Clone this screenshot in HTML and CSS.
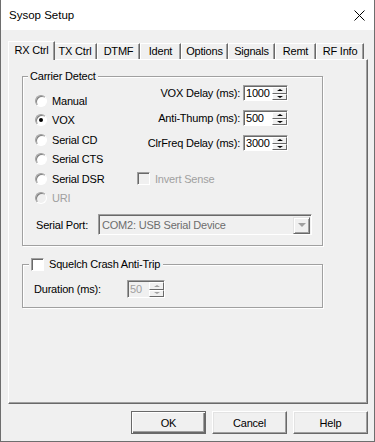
FILE: index.html
```html
<!DOCTYPE html>
<html lang="en">
<head>
  <meta charset="UTF-8" />
  <title>Sysop Setup</title>
  <link rel="stylesheet" href="styles.css">
</head>
<body>
  <div class="window">
    <div class="titlebar">
      <span class="title">Sysop Setup</span>
      <svg class="close" width="11" height="11" viewBox="0 0 11 11">
        <path d="M0.5 0.5 L10.5 10.5 M10.5 0.5 L0.5 10.5" stroke="#000" stroke-width="1" fill="none" />
      </svg>
    </div>

    <div class="client">
      <div class="tabs">
        <div class="tab active">RX Ctrl</div>
        <div class="tab">TX Ctrl</div>
        <div class="tab">DTMF</div>
        <div class="tab">Ident</div>
        <div class="tab">Options</div>
        <div class="tab">Signals</div>
        <div class="tab">Remt</div>
        <div class="tab">RF Info</div>
      </div>

      <div class="panel">
        <fieldset class="group carrier">
          <legend>Carrier Detect</legend>
          <div class="carrier-body">
            <div class="radios">
              <div class="radio"><span class="rb"></span>Manual</div>
              <div class="radio"><span class="rb checked"></span>VOX</div>
              <div class="radio"><span class="rb"></span>Serial CD</div>
              <div class="radio"><span class="rb"></span>Serial CTS</div>
              <div class="radio"><span class="rb"></span>Serial DSR</div>
              <div class="radio disabled"><span class="rb"></span>URI</div>
            </div>
            <div class="delays">
              <div class="spin-row">
                <span>VOX Delay (ms):</span>
                <span class="spin"><span class="spin-val">1000</span><span class="spin-btns"><span class="up"></span><span class="dn"></span></span></span>
              </div>
              <div class="spin-row">
                <span>Anti-Thump (ms):</span>
                <span class="spin"><span class="spin-val">500</span><span class="spin-btns"><span class="up"></span><span class="dn"></span></span></span>
              </div>
              <div class="spin-row">
                <span>ClrFreq Delay (ms):</span>
                <span class="spin"><span class="spin-val">3000</span><span class="spin-btns"><span class="up"></span><span class="dn"></span></span></span>
              </div>
              <div class="check disabled"><span class="cb"></span>Invert Sense</div>
            </div>
          </div>
          <div class="port-row">
            <span class="port-label">Serial Port:</span>
            <div class="combo">
              <span class="combo-text">COM2: USB Serial Device</span>
              <span class="drop"></span>
            </div>
          </div>
        </fieldset>

        <fieldset class="group squelch">
          <legend><span class="cb"></span>Squelch Crash Anti-Trip</legend>
          <div class="dur-row">
            <span class="dur-label">Duration (ms):</span>
            <span class="spin small disabled"><span class="spin-val">50</span><span class="spin-btns"><span class="up"></span><span class="dn"></span></span></span>
          </div>
        </fieldset>
      </div>

      <div class="buttons">
        <button class="btn default">OK</button>
        <button class="btn">Cancel</button>
        <button class="btn">Help</button>
      </div>
    </div>
  </div>
</body>
</html>
```

FILE: styles.css
```css
* {
  box-sizing: border-box;
}

body {
  margin: 0;
  font-family: "Liberation Sans", Arial, sans-serif;
  font-size: 11px;
  letter-spacing: -0.2px;
  color: #000;
  background: #fff;
}

.window {
  width: 375px;
  height: 442px;
  border: 1px solid #6e6e6e;
  border-top: 0;
  background: #f0f0f0;
  display: flex;
  flex-direction: column;
}

.titlebar {
  height: 30px;
  background: #fff;
  display: flex;
  align-items: center;
  justify-content: space-between;
  padding: 0 9px 0 8px;
  font-size: 11.5px;
  letter-spacing: 0;
}

.close {
  display: block;
  margin-top: 1px;
}

.client {
  padding: 11px 6px 0 7px;
}

/* tab strip */
.tabs {
  display: flex;
  align-items: flex-end;
  height: 19px;
  padding-left: 2px;
  margin-bottom: -1px;
  position: relative;
  z-index: 1;
}

.tab {
  height: 16px;
  margin-bottom: 1px;
  border: 1px solid;
  border-bottom: 0;
  border-color: #fff #696969 transparent #fff;
  box-shadow: inset -1px 0 0 #a0a0a0;
  background: #f0f0f0;
  text-align: center;
  line-height: 14px;
  white-space: nowrap;
}

.tab:nth-child(1) { width: 43px; }
.tab:nth-child(2) { width: 44px; }
.tab:nth-child(3) { width: 43px; }
.tab:nth-child(4) { width: 41px; }
.tab:nth-child(5) { width: 47px; }
.tab:nth-child(6) { width: 47px; }
.tab:nth-child(7) { width: 41px; }
.tab:nth-child(8) { width: 48px; }

.tab.active {
  width: 47px;
  height: 19px;
  margin: 0 -2px;
  line-height: 16px;
  position: relative;
  z-index: 2;
}

.panel {
  height: 345px;
  border: 1px solid;
  border-color: #fff #696969 #696969 #fff;
  box-shadow: inset -1px -1px 0 #a0a0a0;
  padding: 9px 0 0 13px;
}

/* group boxes */
.group {
  width: 301px;
  min-width: 0;
  margin: 0;
  padding: 0 0 10px 12px;
  border: 1px solid #a0a0a0;
  box-shadow: 1px 1px 0 #fff, inset 1px 1px 0 #fff;
}

.group legend {
  padding: 0 2px;
  margin-left: -7px;
  line-height: 14px;
  background: #f0f0f0;
}

.carrier-body {
  display: grid;
  grid-template-columns: 102px 151px;
  padding-top: 2px;
}

.radios {
  margin-top: 6px;
}

.radio {
  height: 19.5px;
  display: flex;
  align-items: center;
  gap: 5px;
}

.rb {
  width: 12px;
  height: 12px;
  border-radius: 50%;
  border: 1px solid;
  border-color: #a0a0a0 #fff #fff #a0a0a0;
  box-shadow: inset 1px 1px 0 #808080;
  background: #fff;
  display: flex;
  align-items: center;
  justify-content: center;
}

.rb.checked::after {
  content: "";
  width: 4px;
  height: 4px;
  border-radius: 50%;
  background: #000;
}

.disabled {
  color: #a0a0a0;
}

.radio.disabled .rb,
.check.disabled .cb {
  background: #f0f0f0;
}

.spin-row {
  display: flex;
  justify-content: flex-end;
  align-items: center;
  gap: 3px;
  height: 16px;
  margin-bottom: 9px;
}

.spin {
  display: flex;
  width: 45px;
  height: 16px;
  background: #fff;
  border: 1px solid;
  border-color: #a0a0a0 #fff #fff #a0a0a0;
  box-shadow: inset 1px 1px 0 #696969;
}

.spin-val {
  flex: 1;
  padding: 1px 0 0 2px;
  line-height: 13px;
}

.spin-btns {
  width: 15px;
  display: flex;
  flex-direction: column;
  padding: 1px 0 0 0;
}

.spin-btns span {
  flex: 1;
  background: #f0f0f0;
  border: 1px solid;
  border-color: #fff #696969 #696969 #fff;
  display: flex;
  align-items: center;
  justify-content: center;
}

.spin-btns .up::after,
.spin-btns .dn::after {
  content: "";
  border-left: 3px solid transparent;
  border-right: 3px solid transparent;
}

.spin-btns .up::after {
  border-bottom: 2px solid #000;
}

.spin-btns .dn::after {
  border-top: 2px solid #000;
}

.spin.disabled {
  background: #f0f0f0;
  color: #a0a0a0;
}

.spin.disabled .up::after {
  border-bottom-color: #a0a0a0;
}

.spin.disabled .dn::after {
  border-top-color: #a0a0a0;
}

.spin.small {
  width: 38px;
  height: 18px;
}

.spin.small .spin-val {
  padding-top: 2px;
}

.check {
  display: flex;
  align-items: center;
  gap: 5px;
  margin-top: 21px;
}

.cb {
  width: 13px;
  height: 13px;
  background: #fff;
  border: 1px solid;
  border-color: #a0a0a0 #fff #fff #a0a0a0;
  box-shadow: inset 1px 1px 0 #696969;
}

.port-row {
  display: flex;
  align-items: center;
  height: 21px;
  margin-top: 6px;
}

.port-label {
  width: 62px;
  margin-left: 1px;
}

.combo {
  width: 214px;
  height: 21px;
  display: flex;
  align-items: center;
  justify-content: space-between;
  border: 1px solid;
  border-color: #a0a0a0 #fff #fff #a0a0a0;
  box-shadow: inset 1px 1px 0 #696969;
  padding: 1px 0 0 3px;
  color: #6d6d6d;
}

.drop {
  width: 17px;
  height: 17px;
  margin-right: 1px;
  border: 1px solid;
  border-color: #e3e3e3 #696969 #696969 #e3e3e3;
  box-shadow: inset 1px 1px 0 #fff, inset -1px -1px 0 #a0a0a0;
  display: flex;
  align-items: center;
  justify-content: center;
}

.drop::after {
  content: "";
  border-left: 4px solid transparent;
  border-right: 4px solid transparent;
  border-top: 4px solid #a0a0a0;
}

.squelch {
  margin-top: 12px;
  padding-bottom: 9px;
}

.squelch legend {
  display: flex;
  align-items: center;
  gap: 5px;
  margin-left: -6px;
  padding: 0 3px 0 2px;
  line-height: 13px;
}

.dur-row {
  display: flex;
  align-items: center;
  margin: 9px 0 0 -1px;
}

.dur-label {
  width: 93px;
}

/* dialog buttons */
.buttons {
  display: flex;
  justify-content: flex-end;
  gap: 6px;
  margin-top: 7px;
}

.btn {
  width: 75px;
  height: 23px;
  font: inherit;
  letter-spacing: inherit;
  color: #000;
  background: #f0f0f0;
  border: 1px solid;
  border-color: #fff #696969 #696969 #fff;
  box-shadow: inset -1px -1px 0 #a0a0a0, inset 1px 1px 0 #e3e3e3;
  padding: 0;
}

.btn.default {
  border-color: #696969;
  box-shadow: inset 1px 1px 0 #fff, inset -1px -1px 0 #696969, inset -2px -2px 0 #a0a0a0;
}
```
